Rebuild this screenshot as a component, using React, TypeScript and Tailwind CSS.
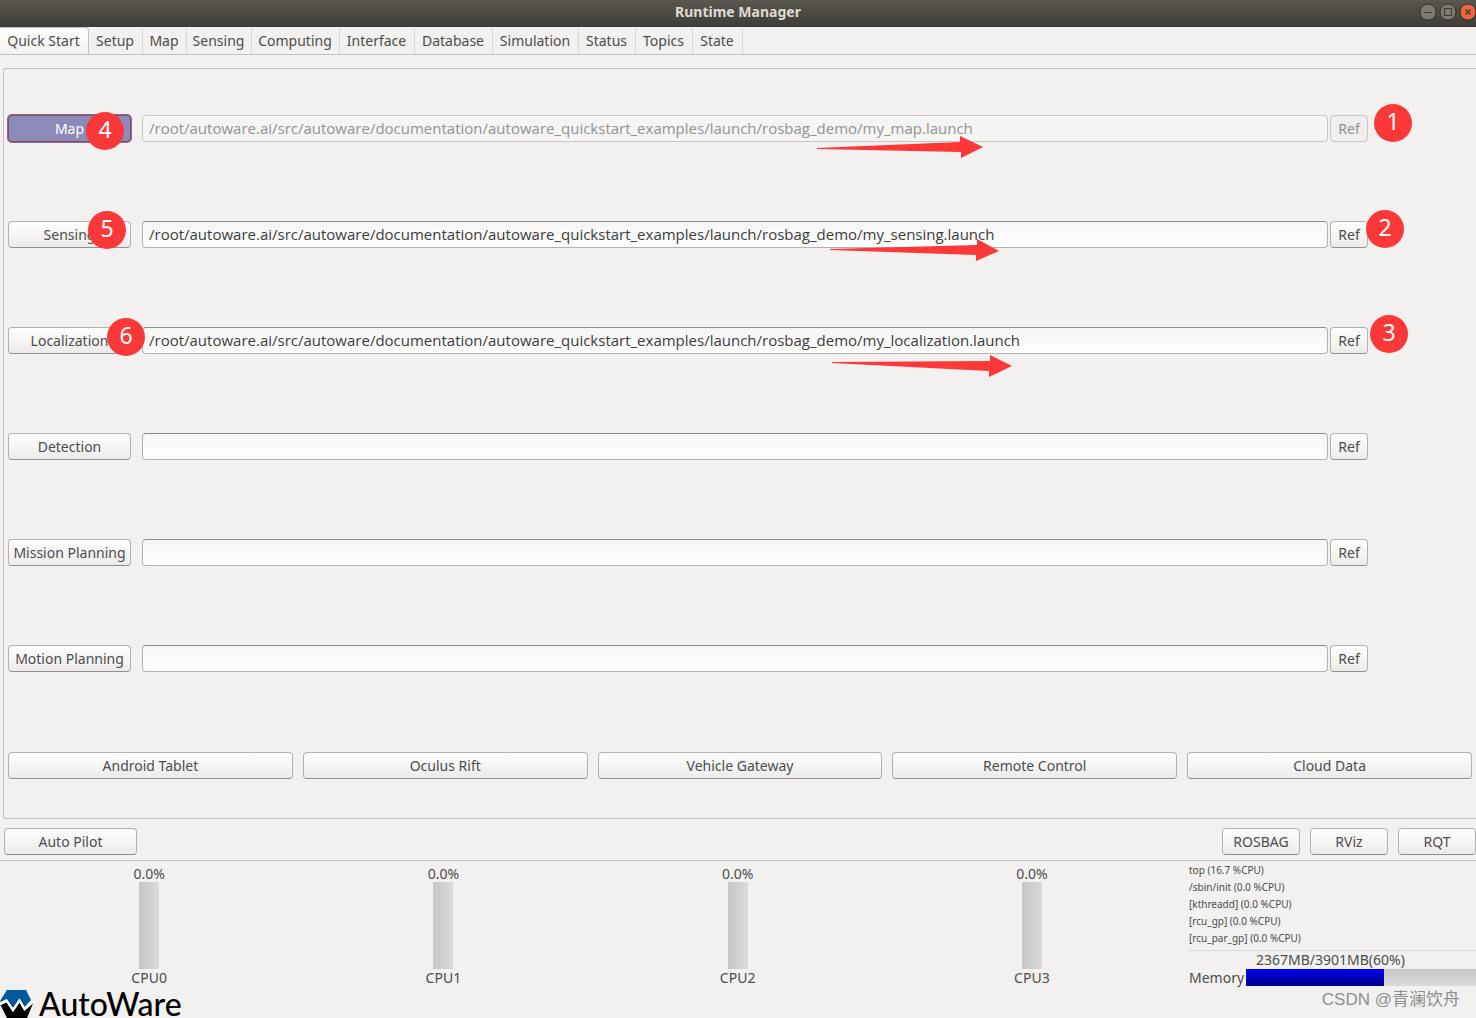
import React, { useState } from "react";
import clsx from "clsx";

interface Badge {
  label: string;
  className: string;
}

interface LaunchRow {
  id: string;
  title: string;
  path: string;
  running?: boolean;
  badges?: Badge[];
  arrow?: { points: string; className: string; viewBox: string };
}

const TABS: { title: string; width: string }[] = [
  { title: "Quick Start", width: "w-[89px]" },
  { title: "Setup", width: "w-[54px]" },
  { title: "Map", width: "w-[44px]" },
  { title: "Sensing", width: "w-[65px]" },
  { title: "Computing", width: "w-[88px]" },
  { title: "Interface", width: "w-[75px]" },
  { title: "Database", width: "w-[78px]" },
  { title: "Simulation", width: "w-[86px]" },
  { title: "Status", width: "w-[57px]" },
  { title: "Topics", width: "w-[57px]" },
  { title: "State", width: "w-[50px]" },
];

const LAUNCH_DIR =
  "/root/autoware.ai/src/autoware/documentation/autoware_quickstart_examples/launch/rosbag_demo/";

const ROWS: LaunchRow[] = [
  {
    id: "map",
    title: "Map",
    path: LAUNCH_DIR + "my_map.launch",
    running: true,
    badges: [
      { label: "4", className: "left-[78px] -top-[3px]" },
      { label: "1", className: "right-[60px] -top-[11px]" },
    ],
    arrow: {
      points: "0,12 143,6 143,0 166,11 144,22 144,16 0,13",
      className: "left-[809px] top-[21px] w-[166px]",
      viewBox: "0 0 166 22",
    },
  },
  {
    id: "sensing",
    title: "Sensing",
    path: LAUNCH_DIR + "my_sensing.launch",
    badges: [
      { label: "5", className: "left-[80px] -top-[10px]" },
      { label: "2", className: "right-[68px] -top-[11px]" },
    ],
    arrow: {
      points: "0,10 147,6 147,0 169,12 146,22 146,16 0,11",
      className: "left-[822px] top-[18px] w-[169px]",
      viewBox: "0 0 169 22",
    },
  },
  {
    id: "localization",
    title: "Localization",
    path: LAUNCH_DIR + "my_localization.launch",
    badges: [
      { label: "6", className: "left-[99px] -top-[9px]" },
      { label: "3", className: "right-[64px] -top-[12px]" },
    ],
    arrow: {
      points: "0,7 158,6 158,0 180,11 157,22 157,16 0,8",
      className: "left-[824px] top-[28px] w-[180px]",
      viewBox: "0 0 180 22",
    },
  },
  { id: "detection", title: "Detection", path: "" },
  { id: "mission", title: "Mission Planning", path: "" },
  { id: "motion", title: "Motion Planning", path: "" },
];

const DEVICES = [
  "Android Tablet",
  "Oculus Rift",
  "Vehicle Gateway",
  "Remote Control",
  "Cloud Data",
];

const TOOLS = ["ROSBAG", "RViz", "RQT"];

const CPUS = [
  { name: "CPU0", load: 0 },
  { name: "CPU1", load: 0 },
  { name: "CPU2", load: 0 },
  { name: "CPU3", load: 0 },
];

const PROCESSES = [
  "top (16.7 %CPU)",
  "/sbin/init (0.0 %CPU)",
  "[kthreadd] (0.0 %CPU)",
  "[rcu_gp] (0.0 %CPU)",
  "[rcu_par_gp] (0.0 %CPU)",
];

function GtkButton({
  className,
  active,
  ...props
}: React.ButtonHTMLAttributes<HTMLButtonElement> & { active?: boolean }) {
  return (
    <button
      type="button"
      className={clsx(
        "h-[27px] shrink-0 rounded-[4px] border text-center whitespace-nowrap",
        active
          ? "border-[#9a4a48] bg-[#8b8bb9] text-white ring-1 ring-[#7a6ba0]"
          : "border-[#b4b2af] border-b-[#93918e] bg-linear-to-b from-white to-[#ecebe9]",
        "disabled:border-[#c8c7c5] disabled:from-[#efeeed] disabled:to-[#efeeed] disabled:text-[#929292]",
        className
      )}
      {...props}
    />
  );
}

function TitleBar() {
  return (
    <header className="relative flex h-[27px] items-start justify-end bg-linear-to-b from-[#5a574f] to-[#3e3d39]">
      <h1 className="absolute inset-x-0 top-0 text-center leading-6 font-bold text-[#dfdbd2]">
        Runtime Manager
      </h1>
      <div className="relative flex gap-[2px] pt-[2px]">
        <button type="button" aria-label="Minimize">
          <svg width="18" height="20" viewBox="0 0 18 20" fill="none">
            <circle cx="9" cy="10" r="8" fill="#7c7a73" stroke="#35342f" />
            <path d="M5 10.5h8" stroke="#3c3b37" />
          </svg>
        </button>
        <button type="button" aria-label="Maximize">
          <svg width="18" height="20" viewBox="0 0 18 20" fill="none">
            <circle cx="9" cy="10" r="8" fill="#7c7a73" stroke="#35342f" />
            <rect x="5.500" y="6.500" width="7" height="7" stroke="#3c3b37" />
          </svg>
        </button>
        <button type="button" aria-label="Close">
          <svg width="17" height="20" viewBox="0 0 17 20" fill="none">
            <circle cx="9" cy="10" r="8" fill="#ee6639" stroke="#35342f" />
            <path d="m6.500 7.500 5 5m0-5-5 5" stroke="#3c3b37" strokeWidth="1.400" />
          </svg>
        </button>
      </div>
    </header>
  );
}

function TabBar({ active, onSelect }: { active: string; onSelect: (t: string) => void }) {
  return (
    <nav role="tablist" className="flex h-7 border-b border-[#c4c2bf]">
      {TABS.map((tab) => (
        <button
          key={tab.title}
          type="button"
          role="tab"
          aria-selected={tab.title === active}
          onClick={() => onSelect(tab.title)}
          className={clsx(
            "shrink-0 border-t border-r pr-px text-center whitespace-nowrap",
            tab.width,
            tab.title === active
              ? "rounded-tr-[4px] border-[#c4c2bf] bg-linear-to-b from-white to-[#f2f1ef]"
              : "border-t-transparent border-r-[#dcdad8]"
          )}
        >
          {tab.title}
        </button>
      ))}
    </nav>
  );
}

function LaunchRowView({ row }: { row: LaunchRow }) {
  const [path, setPath] = useState(row.path);

  return (
    <div className="relative flex h-[27px] items-center">
      <GtkButton active={row.running} className="w-[123px]">
        {row.title}
      </GtkButton>
      <input
        id={row.id}
        aria-label={`${row.title} launch file`}
        value={path}
        onChange={(e) => setPath(e.target.value)}
        disabled={row.running}
        className={clsx(
          "ml-[11px] h-[27px] min-w-0 flex-1 rounded-[4px] border px-[6px] pb-[2px] outline-none",
          "font-['Open_Sans',sans-serif] text-[15px]",
          row.running
            ? "border-[#c8c7c5] bg-[#f5f5f4] text-[#929292]"
            : "border-[#b4b2af] border-t-[#8e8c89] bg-linear-to-b from-[#f5f5f5] to-white text-[#3c3c3c]"
        )}
      />
      <GtkButton disabled={row.running} className="mr-[104px] ml-[2px] w-[38px]">
        Ref
      </GtkButton>

      {row.arrow && (
        <svg
          className={clsx("pointer-events-none absolute h-[22px]", row.arrow.className)}
          viewBox={row.arrow.viewBox}
          fill="#fc3838"
        >
          <polygon points={row.arrow.points} />
        </svg>
      )}
      {row.badges?.map((badge) => (
        <span
          key={badge.label}
          className={clsx(
            "absolute h-[38px] w-[38px] rounded-full bg-[#fc3838]",
            "text-center text-[23px] leading-[34px] text-white",
            badge.className
          )}
        >
          {badge.label}
        </span>
      ))}
    </div>
  );
}

function CpuMeter({ name, load }: { name: string; load: number }) {
  return (
    <div className="flex flex-col items-center pt-1">
      <span className="leading-[17px]">{load.toFixed(1)}%</span>
      <div className="flex h-[87px] w-5 items-end bg-linear-to-r from-[#c6c6c6] to-[#dadada]">
        <div className="w-full bg-[#0000e0]" style={{ height: `${load}%` }} />
      </div>
      <span className="leading-[17px]">{name}</span>
    </div>
  );
}

function MemoryMeter({ used, total }: { used: number; total: number }) {
  const percent = Math.floor((used / total) * 100);

  return (
    <div className="flex items-end">
      <span className="w-[57px] shrink-0 leading-[17px]">Memory</span>
      <div className="flex-1">
        <div className="pl-[10px] leading-[18px]">
          {`${used}MB/${total}MB(${percent}%)`}
        </div>
        <div className="h-[17px] bg-linear-to-b from-[#c6c6c6] to-[#dadada]">
          <div
            className="h-full bg-linear-to-b from-[#0000f0] to-[#000088]"
            style={{ width: `${percent}%` }}
          />
        </div>
      </div>
    </div>
  );
}

function Logo() {
  return (
    <div className="flex h-7 items-start gap-[5px] text-black">
      <svg width="34" height="28" viewBox="0 0 34 28">
        <path d="M7 0h19l5 10-6.500 7-5-8.500L13 18 6.500 9 1 12 0 11z" fill="#00599f" />
        <path
          d="M0 15.500 6.500 12.500 13 22l6.500-9.500 5 8.500 8.500-7.500-6 14.500H7L1 16z"
          fill="#000"
        />
        <path
          d="M0 14 6.500 10.500 13 20l6.500-9.500 5 8.500 7.500-7.500"
          fill="none"
          stroke="#fff"
          strokeWidth="2.200"
        />
      </svg>
      <span className="font-['Lato',sans-serif] text-[32px] leading-7 font-medium">
        AutoWare
      </span>
    </div>
  );
}

export default function App() {
  const [tab, setTab] = useState("Quick Start");

  return (
    <div className="min-h-screen overflow-hidden bg-[#f2f1ef] font-['Noto_Sans',sans-serif] text-[14px] leading-5 text-[#4c4c4c]">
      <TitleBar />
      <TabBar active={tab} onSelect={setTab} />

      <main className="mt-[13px] ml-[3px] rounded-l-[3px] border border-r-0 border-[#c4c2bf] pt-[46px] pr-1 pb-[39px] pl-1">
        <div className="flex flex-col gap-[79px]">
          {ROWS.map((row) => (
            <LaunchRowView key={row.id} row={row} />
          ))}
        </div>
        <div className="mt-20 grid grid-cols-5 gap-[10px]">
          {DEVICES.map((device) => (
            <GtkButton key={device}>{device}</GtkButton>
          ))}
        </div>
      </main>

      <div className="mt-[9px] flex gap-[10px] border-b border-[#c4c2bf] pb-[5px] pl-1">
        <GtkButton className="mr-auto w-[133px]">Auto Pilot</GtkButton>
        {TOOLS.map((tool) => (
          <GtkButton key={tool} className="w-[78px]">
            {tool}
          </GtkButton>
        ))}
      </div>

      <footer className="flex">
        <div className="flex-1">
          <div className="grid grid-cols-4 pl-[2px]">
            {CPUS.map((cpu) => (
              <CpuMeter key={cpu.name} {...cpu} />
            ))}
          </div>
          <div className="mt-1">
            <Logo />
          </div>
        </div>
        <div className="ml-[10px] w-[287px] pt-px">
          <ul className="border-b border-[#dcdad8] pb-[3px] text-[10px] leading-[17px]">
            {PROCESSES.map((process) => (
              <li key={process}>{process}</li>
            ))}
          </ul>
          <MemoryMeter used={2367} total={3901} />
          <p className="pr-4 text-right font-['Liberation_Sans','Noto_Sans_CJK_SC',sans-serif] text-[17px] leading-7 text-[#8f8f8f]">
            CSDN @青澜饮舟
          </p>
        </div>
      </footer>
    </div>
  );
}
